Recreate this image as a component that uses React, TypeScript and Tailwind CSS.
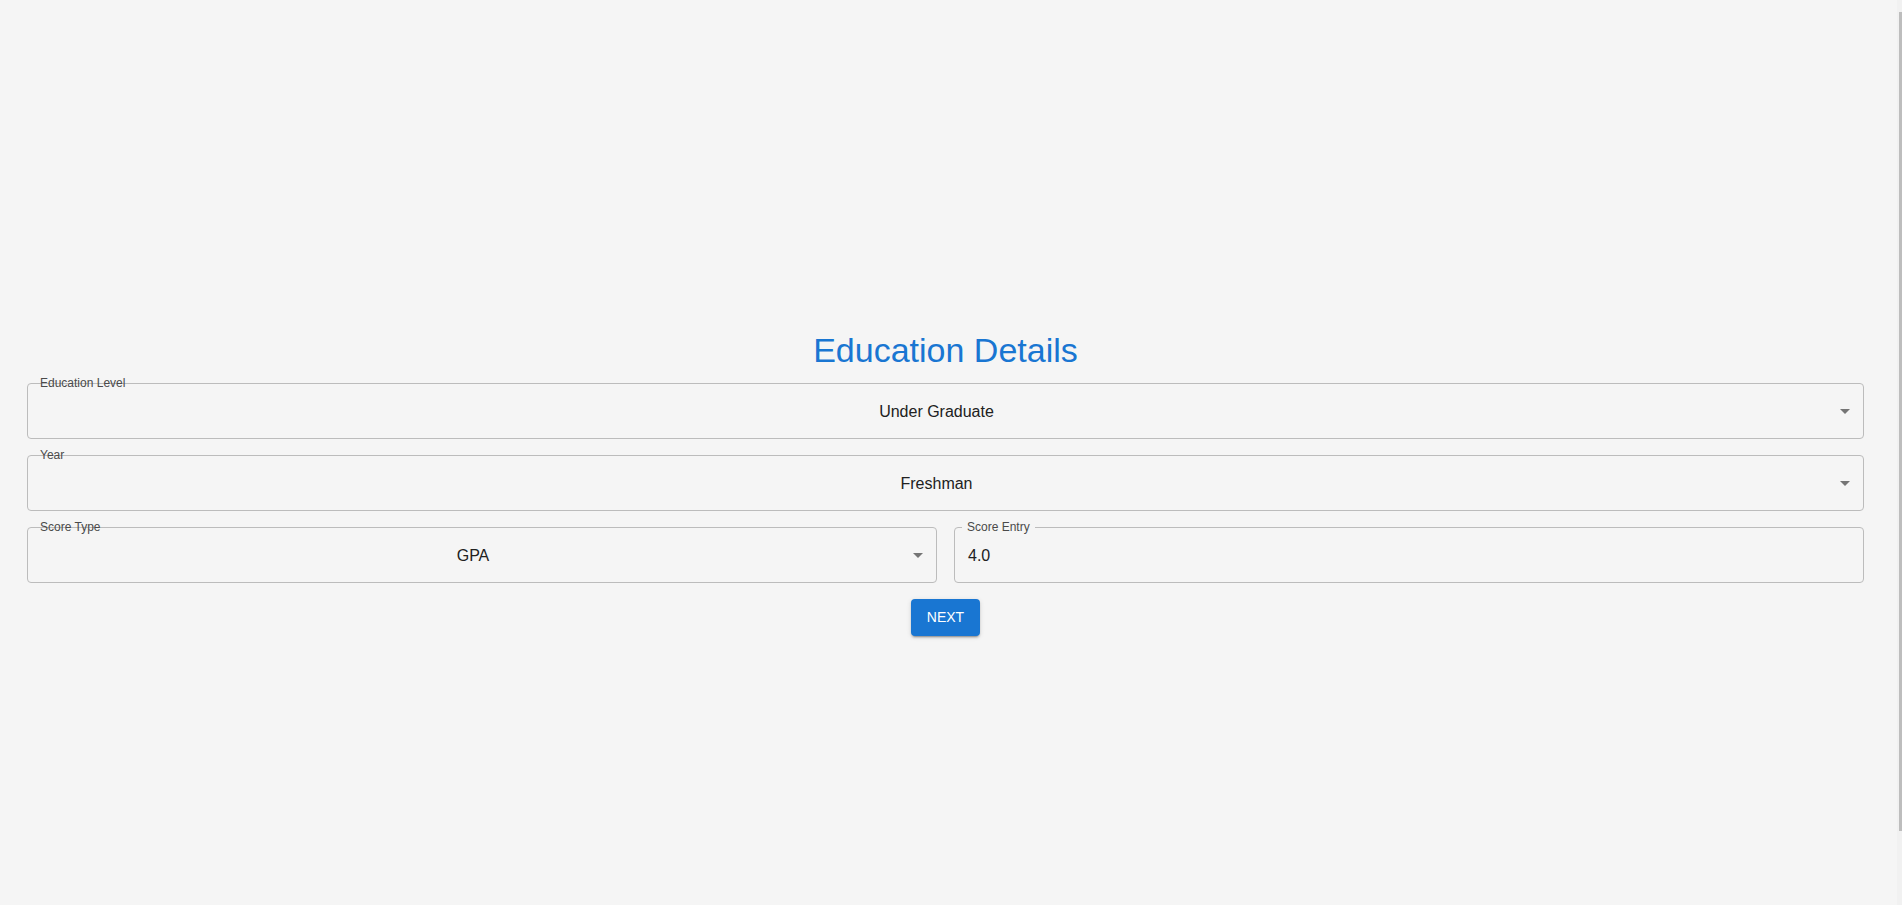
import React from 'react';

const font = { fontFamily: '"Liberation Sans", Arial, sans-serif' };

const ArrowDrop = () => (
  <svg viewBox="0 0 24 24" className="absolute right-[6px] top-1/2 -translate-y-1/2 w-6 h-6 fill-[#757575]">
    <path d="M7 10l5 5 5-5z" />
  </svg>
);

const SelectField: React.FC<{ label: string; value: string }> = ({ label, value }) => (
  <div className="relative h-14 rounded-[4px] border border-[#bcbcbc] flex items-center pl-[14px] pr-[32px]">
    <span className="absolute left-[12px] top-[-9px] text-[12px] leading-[16px] text-[#4a4a4a]">{label}</span>
    <span className="flex-1 text-center text-[16px] leading-[23px] text-[#212121]">{value}</span>
    <ArrowDrop />
  </div>
);

const TextField: React.FC<{ label: string; value: string }> = ({ label, value }) => (
  <div className="relative h-14 rounded-[4px] border border-[#bcbcbc] flex items-center px-[13px]">
    <span className="absolute left-[7px] top-[-9px] px-[5px] bg-[#f5f5f5] text-[12px] leading-[16px] text-[#4a4a4a]">{label}</span>
    <span className="text-[16px] leading-[23px] text-[#212121]">{value}</span>
  </div>
);

export default function App() {
  return (
    <div className="relative min-h-screen bg-[#f5f5f5] pl-[27px] pr-[38px] pt-[329px]" style={font}>
      <h4 className="text-center text-[34px] leading-[42px] text-[#1976d2]">Education Details</h4>

      <div className="mt-[12px] flex flex-col gap-4">
        <SelectField label="Education Level" value="Under Graduate" />
        <SelectField label="Year" value="Freshman" />
        <div className="grid grid-cols-2 gap-[17px]">
          <SelectField label="Score Type" value="GPA" />
          <TextField label="Score Entry" value="4.0" />
        </div>
      </div>

      <div className="mt-4 flex justify-center">
        <button className="px-4 py-[6px] rounded-[4px] bg-[#1976d2] text-white text-[14px] leading-[24.5px] uppercase shadow-[0_3px_1px_-2px_rgba(0,0,0,0.2),0_2px_2px_0_rgba(0,0,0,0.14),0_1px_5px_0_rgba(0,0,0,0.12)]">
          Next
        </button>
      </div>

      {/* scrollbar */}
      <div className="absolute right-0 top-0 h-full w-[5px] bg-[#f1f1f1]">
        <div className="ml-[2px] mt-[12px] h-[819px] w-[3px] bg-[#bdbdbd]" />
      </div>
    </div>
  );
}
